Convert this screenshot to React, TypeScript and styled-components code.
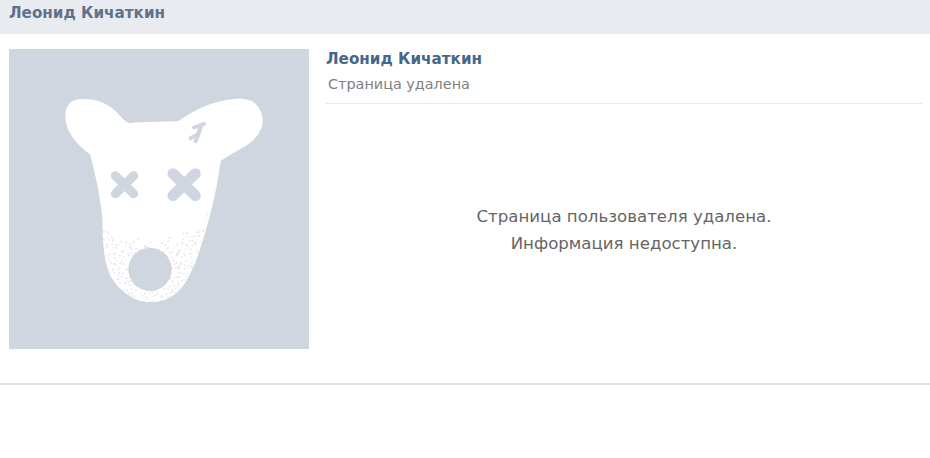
import React, { useMemo } from "react";
import styled, { createGlobalStyle } from "styled-components";

const Global = createGlobalStyle`
  html, body { margin: 0; padding: 0; background: #fff; }
  body { font-family: "DejaVu Sans", Verdana, sans-serif; }
`;

const Page = styled.div`
  width: 930px;
  height: 458px;
  overflow: hidden;
  background: #fff;
`;

const TitleBar = styled.header`
  height: 34px;
  box-sizing: border-box;
  padding: 4px 9px 0;
  background: #e8ebf0;
  color: #5f7289;
  font-size: 15.2px;
  line-height: 18px;
  font-weight: 700;
`;

const Profile = styled.section`
  display: flex;
  gap: 17px;
  height: 351px;
  box-sizing: border-box;
  padding: 15px 8px 0 9px;
  border-bottom: 2px solid #e2e3e5;
`;

const Avatar = styled.div`
  flex: none;
  width: 300px;
  height: 300px;
  background: #d0d6df;
`;

const Info = styled.div`
  flex: 1;
  display: flex;
  flex-direction: column;
  min-width: 0;
`;

const NameBlock = styled.div`
  height: 55px;
  box-sizing: border-box;
  border-bottom: 1px solid #e8eaec;
`;

const Name = styled.h1`
  margin: 0;
  color: #45678a;
  font-size: 15.2px;
  line-height: 20px;
  font-weight: 700;
`;

const Status = styled.div`
  margin: 6px 0 0 2px;
  color: #808080;
  font-size: 14.4px;
  line-height: 18px;
`;

const Message = styled.p`
  margin: 99px 0 0;
  text-align: center;
  color: #656565;
  font-size: 16.6px;
  line-height: 27px;
`;

const BG = "#d0d6df";

function Dog() {
  const dots = useMemo(() => {
    let seed = 12345;
    const rnd = () => {
      seed = (seed * 1664525 + 1013904223) % 4294967296;
      return seed / 4294967296;
    };
    const out: { x: number; y: number; o: number }[] = [];
    for (let gy = 360; gy < 660; gy += 12) {
      for (let gx = 140; gx < 500; gx += 12) {
        const x = gx + (rnd() - 0.5) * 11;
        const y = gy + (rnd() - 0.5) * 11;
        const dx = (x - 300) / 170;
        const dome = 475 - 85 * dx * dx;
        const t = Math.max(0, Math.min(1, (y - dome + 15) / 50));
        if (rnd() < t * 0.92) out.push({ x, y, o: 0.45 + rnd() * 0.4 });
      }
    }
    return out;
  }, []);

  const head =
    "M100 42 C140 42 175 55 200 82 C215 98 225 112 240 115 C280 108 340 112 385 108 C405 95 440 72 480 58 C525 42 570 36 600 46 C625 56 640 85 638 112 C635 145 610 170 575 190 C555 202 530 215 512 228 C505 275 495 340 480 390 C465 445 448 510 426 555 C408 595 390 620 366 633 C345 648 320 652 300 651 C275 651 255 645 234 630 C205 610 185 585 174 555 C165 530 161 495 159 465 C158 440 158 415 156 390 C150 330 135 265 120 208 C95 190 70 165 55 135 C42 105 42 70 62 52 C72 45 85 42 100 42 Z";

  return (
    <svg width="300" height="300" viewBox="-123 -108 900 900" aria-hidden="true" style={{ display: "block" }}>
      <defs>
        <clipPath id="head-clip">
          <path d={head} />
        </clipPath>
      </defs>
      <path d={head} fill="#fff" />
      <g clipPath="url(#head-clip)" fill={BG}>
        {dots.map((d, i) => (
          <circle key={i} cx={d.x} cy={d.y} r={2.6} opacity={d.o} />
        ))}
      </g>
      <circle cx="300" cy="553" r="65" fill={BG} />
      <g stroke={BG} strokeLinecap="round" fill="none">
        <path d="M196 272 L251 326 M251 272 L196 326" strokeWidth="27" />
        <path d="M369 266 L436 332 M436 266 L369 332" strokeWidth="33" />
        <path d="M462 117 C450 122 441 125 432 127" strokeWidth="12" />
        <path d="M453 120 C449 138 443 152 437 168" strokeWidth="13" />
        <path d="M421 160 C428 156 436 152 444 146" strokeWidth="11" />
      </g>
    </svg>
  );
}

export default function App() {
  return (
    <Page>
      <Global />
      <TitleBar>Леонид Кичаткин</TitleBar>
      <Profile>
        <Avatar>
          <Dog />
        </Avatar>
        <Info>
          <NameBlock>
            <Name>Леонид Кичаткин</Name>
            <Status>Страница удалена</Status>
          </NameBlock>
          <Message>
            Страница пользователя удалена.
            <br />
            Информация недоступна.
          </Message>
        </Info>
      </Profile>
    </Page>
  );
}
